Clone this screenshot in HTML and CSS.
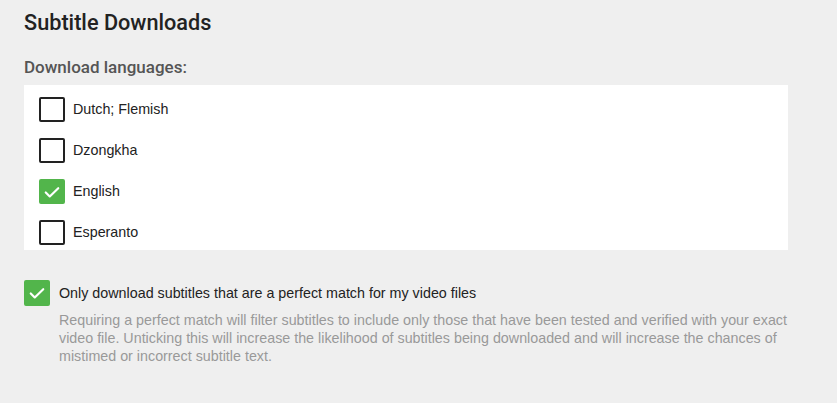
FILE: index.html
```html
<!DOCTYPE html>
<html>
<head>
<meta charset="utf-8">
<link rel="stylesheet" href="styles.css">
</head>
<body>
<div class="page">
  <h1 class="title">Subtitle Downloads</h1>
  <div class="section-label">Download languages:</div>
  <div class="lang-list">
    <div class="lang-row"><span class="cb"></span><span class="lang-name">Dutch; Flemish</span></div>
    <div class="lang-row"><span class="cb"></span><span class="lang-name">Dzongkha</span></div>
    <div class="lang-row"><span class="cb cb-on"><svg viewBox="0 0 24 24" width="20" height="20"><path d="M4.5 12.5l4.8 4.8L19.5 7.5" fill="none" stroke="#fff" stroke-width="2.6" stroke-linecap="round" stroke-linejoin="round"/></svg></span><span class="lang-name">English</span></div>
    <div class="lang-row"><span class="cb"></span><span class="lang-name">Esperanto</span></div>
  </div>
  <div class="option">
    <span class="cb cb-on cb-big"><svg viewBox="0 0 24 24" width="20" height="20"><path d="M4.5 12.5l4.8 4.8L19.5 7.5" fill="none" stroke="#fff" stroke-width="2.6" stroke-linecap="round" stroke-linejoin="round"/></svg></span>
    <div class="option-text">
      <div class="option-title">Only download subtitles that are a perfect match for my video files</div>
      <div class="option-desc">Requiring a perfect match will filter subtitles to include only those that have been tested and verified with your exact video file. Unticking this will increase the likelihood of subtitles being downloaded and will increase the chances of mistimed or incorrect subtitle text.</div>
    </div>
  </div>
</div>
</body>
</html>
```
FILE: styles.css
```css
html, body {
  margin: 0;
  padding: 0;
  background: #efefef;
}
.page {
  padding: 9px 24px 0 24px;
  width: 764px;
}
.title {
  font-family: Roboto, "Liberation Sans", sans-serif;
  font-weight: 500;
  font-size: 21.7px;
  line-height: 28px;
  color: #222;
  margin: 0 0 20px 0;
}
.section-label {
  font-family: Roboto, "Liberation Sans", sans-serif;
  font-weight: 500;
  font-size: 17px;
  line-height: 21px;
  color: #555;
  margin-bottom: 7px;
}
.lang-list {
  background: #fff;
  padding: 12px 15px 5px 15px;
  display: flex;
  flex-direction: column;
  gap: 16px;
}
.lang-row {
  display: flex;
  align-items: center;
  gap: 8px;
  height: 25px;
}
.lang-row .lang-name {
  margin-top: -1px;
}
.cb {
  box-sizing: border-box;
  width: 26px;
  height: 25px;
  border: 2px solid #222;
  border-radius: 2px;
  display: flex;
  align-items: center;
  justify-content: center;
  flex: none;
}
.cb-on {
  background: #52b54b;
  border-color: #52b54b;
}
.lang-name {
  font-family: "Liberation Sans", Arial, sans-serif;
  font-size: 14.3px;
  color: #222;
}
.option {
  display: flex;
  align-items: flex-start;
  gap: 9px;
  margin-top: 30px;
}
.cb-big {
  width: 26px;
  height: 26px;
}
.option-text {
  font-family: "Liberation Sans", Arial, sans-serif;
  font-size: 14.3px;
}
.option-title {
  color: #222;
  line-height: 18px;
  margin-top: 4px;
}
.option-desc {
  color: #999;
  line-height: 18px;
  margin-top: 9px;
  max-width: 730px;
}
```
